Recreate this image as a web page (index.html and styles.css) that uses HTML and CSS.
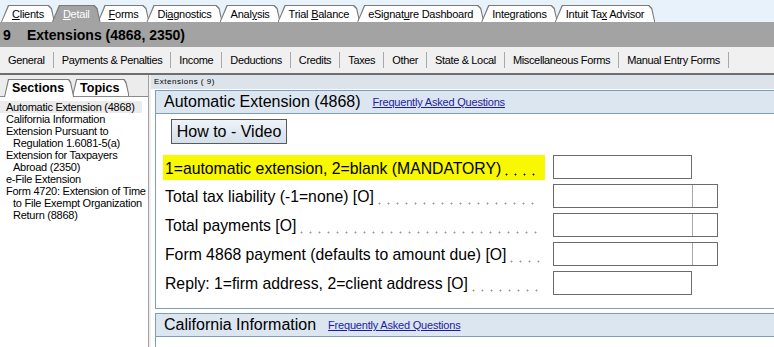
FILE: index.html
```html
<!DOCTYPE html>
<html lang="en">
<head>
  <meta charset="UTF-8" />
  <title>Extensions (4868, 2350)</title>
  <link rel="stylesheet" href="styles.css">
</head>
<body>
  <nav class="tabbar">
    <span class="tab"><u>C</u>lients</span>
    <span class="tab active"><u>D</u>etail</span>
    <span class="tab"><u>F</u>orms</span>
    <span class="tab">Di<u>a</u>gnostics</span>
    <span class="tab">Anal<u>y</u>sis</span>
    <span class="tab">Trial <u>B</u>alance</span>
    <span class="tab">eSignat<u>u</u>re Dashboard</span>
    <span class="tab">Inte<u>g</u>rations</span>
    <span class="tab">Intuit Ta<u>x</u> Advisor</span>
  </nav>

  <div class="titlebar">
    <span class="screen-num">9</span>
    <span>Extensions (4868, 2350)</span>
  </div>

  <div class="subnav">
    <span class="subnav-item">General</span>
    <span class="subnav-item">Payments &amp; Penalties</span>
    <span class="subnav-item">Income</span>
    <span class="subnav-item">Deductions</span>
    <span class="subnav-item">Credits</span>
    <span class="subnav-item">Taxes</span>
    <span class="subnav-item">Other</span>
    <span class="subnav-item">State &amp; Local</span>
    <span class="subnav-item">Miscellaneous Forms</span>
    <span class="subnav-item">Manual Entry Forms</span>
  </div>

  <div class="workspace">
    <aside class="sidebar">
      <div class="side-tabs">
        <span class="side-tab active">Sections</span>
        <span class="side-tab">Topics</span>
      </div>
      <ul class="side-list">
        <li class="selected">Automatic Extension (4868)</li>
        <li>California Information</li>
        <li>Extension Pursuant to<br>Regulation 1.6081-5(a)</li>
        <li>Extension for Taxpayers<br>Abroad (2350)</li>
        <li>e-File Extension</li>
        <li>Form 4720: Extension of Time<br>to File Exempt Organization<br>Return (8868)</li>
      </ul>
    </aside>

    <main class="content">
      <div class="crumb">Extensions ( 9)</div>

      <section class="panel">
        <header class="panel-head">
          <h2>Automatic Extension (4868)</h2>
          <a href="#">Frequently Asked Questions</a>
        </header>
        <div class="panel-body">
          <button class="video-btn">How to - Video</button>

          <div class="row">
            <label class="label mandatory">1=automatic extension, 2=blank (MANDATORY)<span class="leader"></span></label>
            <span class="field"></span>
          </div>
          <div class="row">
            <label class="label">Total tax liability (-1=none) [O]<span class="leader"></span></label>
            <span class="field"><span class="field-tail"></span></span>
          </div>
          <div class="row">
            <label class="label">Total payments [O]<span class="leader"></span></label>
            <span class="field"><span class="field-tail"></span></span>
          </div>
          <div class="row">
            <label class="label">Form 4868 payment (defaults to amount due) [O]<span class="leader"></span></label>
            <span class="field"><span class="field-tail"></span></span>
          </div>
          <div class="row">
            <label class="label">Reply: 1=firm address, 2=client address [O]<span class="leader"></span></label>
            <span class="field"></span>
          </div>
        </div>
      </section>

      <section class="panel open">
        <header class="panel-head">
          <h2>California Information</h2>
          <a href="#">Frequently Asked Questions</a>
        </header>
      </section>
    </main>
  </div>
</body>
</html>
```

FILE: styles.css
```css
body {
  margin: 0;
  width: 774px;
  height: 347px;
  overflow: hidden;
  background: #fff;
  color: #000;
  font-family: 'Liberation Sans', Arial, sans-serif;
  font-size: 11px;
}

/* top tabs */
.tabbar {
  height: 22px;
  background: #e8f2fa;
  display: flex;
  align-items: flex-end;
  padding-left: 1px;
}
.tab {
  position: relative;
  z-index: 1;
  height: 17px;
  line-height: 18px;
  padding: 0 11px;
  margin-right: -3px;
  font-size: 11px;
  letter-spacing: -0.25px;
  white-space: nowrap;
}
.tab::before,
.tab::after {
  content: "";
  position: absolute;
  z-index: -1;
  clip-path: polygon(0 100%, 7px 0, calc(100% - 6px) 0, calc(100% - 3px) 3px, 100% 100%);
}
.tab::before {
  inset: 0;
  background: #7a7a7a;
}
.tab::after {
  inset: 1px 1px 0 1px;
  background: #fff;
}
.tab.active {
  z-index: 2;
  color: #fff;
}
.tab.active::after {
  background: #a3a3a3;
}

.titlebar {
  height: 25px;
  background: #a3a3a3;
  display: flex;
  align-items: center;
  padding-left: 3px;
  font-size: 14px;
  font-weight: bold;
}
.screen-num {
  width: 24px;
}

.subnav {
  height: 26px;
  background: #f0f0f0;
  border-bottom: 2px solid #6e6e6e;
  display: flex;
  align-items: center;
}
.subnav-item {
  padding: 0 8px;
  line-height: 16px;
  border-right: 1px solid #a8a8a8;
  font-size: 11px;
  letter-spacing: -0.35px;
  white-space: nowrap;
}

.workspace {
  display: flex;
  height: 272px;
  background: #f0f0f0;
}

/* left sections list */
.sidebar {
  width: 148px;
  background: #fff;
  border-right: 1px solid #a0a0a0;
  margin-right: 2px;
}
.side-tabs {
  height: 21px;
  background: #ececec;
  display: flex;
  align-items: flex-end;
  padding-left: 4px;
  border-bottom: 1px solid #8a8a8a;
}
.side-tab {
  position: relative;
  z-index: 1;
  height: 18px;
  line-height: 19px;
  padding: 0 10px 0 8px;
  margin-right: -2px;
  margin-bottom: -1px;
  font-size: 12.5px;
  font-weight: bold;
}
.side-tab::before,
.side-tab::after {
  content: "";
  position: absolute;
  z-index: -1;
  clip-path: polygon(0 100%, 4px 0, calc(100% - 5px) 0, calc(100% - 3px) 3px, 100% 100%);
}
.side-tab::before {
  inset: 0 0 1px 0;
  background: #7a7a7a;
}
.side-tab::after {
  inset: 1px 1px 1px 1px;
  background: #fff;
}
.side-tab.active {
  z-index: 2;
}
.side-tab.active::before {
  inset: 0;
}
.side-tab.active::after {
  inset: 1px 1px 0 1px;
}
.side-list {
  list-style: none;
  margin: 0;
  padding: 4px 0 0;
  line-height: 12px;
  font-size: 11px;
  letter-spacing: -0.25px;
}
.side-list li {
  padding-left: 13px;
  text-indent: -7px;
  white-space: nowrap;
}
.side-list li.selected {
  background: #ebebeb;
  margin-right: 6px;
}

/* main area */
.content {
  flex: 1;
  background: #fff;
  overflow: hidden;
}
.crumb {
  height: 14px;
  line-height: 14px;
  padding-left: 3px;
  background: #dde3ea;
  font-size: 8px;
  letter-spacing: 0.5px;
}
.panel {
  margin: 1px 0 0 4px;
  border: 1px solid #7f9cb8;
  border-right: none;
}
.panel + .panel {
  margin-top: 4px;
  height: 200px;
}
.panel-head {
  height: 22px;
  background: #dce6f1;
  border-bottom: 1px solid #7f9cb8;
  display: flex;
  align-items: center;
  padding-left: 8px;
}
.panel-head h2 {
  margin: 0;
  font-size: 16px;
  font-weight: normal;
}
.panel-head a {
  margin-left: 12px;
  color: #1c1ca3;
  font-size: 11px;
  letter-spacing: -0.2px;
}
.panel-body {
  padding: 5px 0 13px 7px;
}
.video-btn {
  display: block;
  margin: 0 0 11px 8px;
  width: 116px;
  height: 25px;
  padding: 0;
  border: 1px solid #5a5a5a;
  background: linear-gradient(#eef3f8, #d3dfea);
  font-family: inherit;
  font-size: 16px;
  color: #000;
}

.row {
  display: flex;
  height: 24px;
  margin-bottom: 5px;
}
.row:last-child {
  margin-bottom: 0;
}
.label {
  width: 382px;
  padding: 2px 0 0 2px;
  box-sizing: border-box;
  display: flex;
  align-items: center;
  font-size: 15.75px;
  white-space: nowrap;
}
.label.mandatory {
  background: #f8f800;
  height: 25px;
}
.leader {
  flex: 1;
  align-self: stretch;
  margin: 0 5px 0 1px;
  background: radial-gradient(circle, #999 0.8px, transparent 1.2px) 0 16px / 9px 3px repeat-x;
}
.mandatory .leader {
  background-image: radial-gradient(circle, #222 0.8px, transparent 1.2px);
}
.field {
  display: flex;
  justify-content: flex-end;
  box-sizing: border-box;
  width: 139px;
  height: 24px;
  margin-left: 8px;
  border: 1px solid #6b6b6b;
  background: #fff;
}
.field:has(.field-tail) {
  width: 165px;
}
.field-tail {
  width: 24px;
  border-left: 1px solid #a8a8a8;
}
```
